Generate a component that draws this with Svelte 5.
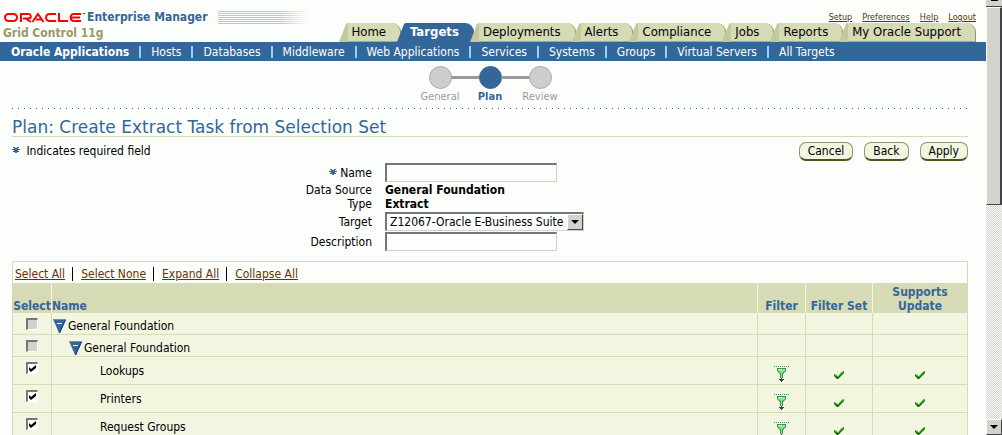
<script>
  const links = ["Setup", "Preferences", "Help", "Logout"];

  const tabs = [
    "Home",
    "Targets",
    "Deployments",
    "Alerts",
    "Compliance",
    "Jobs",
    "Reports",
    "My Oracle Support",
  ];
  const activeTab = "Targets";

  const subTabs = [
    "Oracle Applications",
    "Hosts",
    "Databases",
    "Middleware",
    "Web Applications",
    "Services",
    "Systems",
    "Groups",
    "Virtual Servers",
    "All Targets",
  ];
  const activeSubTab = "Oracle Applications";

  const steps = ["General", "Plan", "Review"];
  const activeStep = "Plan";

  const tableLinks = ["Select All", "Select None", "Expand All", "Collapse All"];

  let taskName = $state("");
  let description = $state("");
  let target = $state("Z12067-Oracle E-Business Suite");

  let rows = $state([
    { name: "General Foundation", level: 0, group: true, checked: false },
    { name: "General Foundation", level: 1, group: true, checked: false },
    { name: "Lookups", level: 2, group: false, checked: true },
    { name: "Printers", level: 2, group: false, checked: true },
    { name: "Request Groups", level: 2, group: false, checked: true },
  ]);
</script>

{#snippet required()}
  <svg class="required" width="8" height="6" viewBox="0 0 8 6" aria-label="Required">
    <path d="M1 0h2v1h2V0h2v1H6v1h2v1H6v1h1v1H5v1H3V5H1V4h1V3H0V2h2V1H1z" fill="#336699" />
  </svg>
{/snippet}

{#snippet tick()}
  <svg class="tick" width="12" height="10" viewBox="0 0 12 10" aria-label="Yes">
    <path d="M1 5h2l2 2 4-5h2v1L5 9H4L1 6z" fill="#006600" />
    <path d="M1 4h1l2 2h1l4-4 1-1h1v1L5 7H4L1 5z" fill="#33bb00" />
  </svg>
{/snippet}

<div class="window">
  <div class="page">
    <header>
      <div class="brand">
        <div class="brand-row">
          <svg class="logo" width="82" height="11" viewBox="0 0 82 11" aria-label="Oracle">
            <g fill="none" stroke="#ff0000" stroke-width="2">
              <path d="M5.5 2h5a3.5 3.5 0 0 1 0 7h-5a3.5 3.5 0 0 1 0-7z" />
              <path d="M18 10V2h7.500a2 2 0 0 1 0 4.500H20M22.500 6.500L28 10" />
              <path d="M29.500 10L35 2l5.500 8M33 7.500h5" />
              <path d="M53 2h-6.500a3.500 3.500 0 0 0 0 7H53" />
              <path d="M56 1v8h9" />
              <path d="M78 2h-7a3.500 3.500 0 0 0 0 7h7M68 5.500h9" />
            </g>
            <path d="M80 1h2v1h-2z" fill="#ff0000" />
          </svg>
          <span class="product">Enterprise Manager</span>
          <span class="stripes"></span>
        </div>
        <div class="edition">Grid Control 11g</div>
      </div>
      <div class="header-right">
        <nav class="global-links">
          {#each links as link}
            <a href="#top">{link}</a>
          {/each}
        </nav>
        <nav class="tabs">
          {#each tabs as tab}
            <a class="tab" class:active={tab === activeTab} href="#top">
              <svg class="slope" width="9" height="19" viewBox="0 0 9 19">
                <path d="M0 19L7 1Q8 0 9 0V19z" />
              </svg>
              <span>{tab}</span>
            </a>
          {/each}
        </nav>
      </div>
    </header>

    <nav class="sub-tabs">
      {#each subTabs as tab}
        <a class:active={tab === activeSubTab} href="#top">{tab}</a>
      {/each}
    </nav>

    <main>
      <ol class="train">
        {#each steps as step}
          <li class:active={step === activeStep}>
            <span class="dot"></span>
            {step}
          </li>
        {/each}
      </ol>
      <svg class="dots" height="1">
        <line x1="0" x2="100%" y1="0.5" y2="0.5" stroke="#336699" stroke-dasharray="1 5" />
      </svg>

      <h1>Plan: Create Extract Task from Selection Set</h1>

      <div class="toolbar">
        <div class="hint">{@render required()} Indicates required field</div>
        <div class="buttons">
          <button type="button">Cancel</button>
          <button type="button">Back</button>
          <button type="button">Apply</button>
        </div>
      </div>

      <form class="fields">
        <label for="name">{@render required()} Name</label>
        <input id="name" type="text" bind:value={taskName} />
        <span>Data Source</span>
        <b>General Foundation</b>
        <span>Type</span>
        <b>Extract</b>
        <label for="target">Target</label>
        <div class="select">
          <select id="target" bind:value={target}>
            <option>Z12067-Oracle E-Business Suite</option>
          </select>
          <span class="arrow"></span>
        </div>
        <label for="description">Description</label>
        <input id="description" type="text" bind:value={description} />
      </form>

      <div class="table-box">
        <div class="table-links">
          {#each tableLinks as link}
            <span><a href="#top">{link}</a></span>
          {/each}
        </div>
        <table>
          <thead>
            <tr>
              <th class="col-select">Select</th>
              <th class="col-name">Name</th>
              <th class="col-filter">Filter</th>
              <th class="col-set">Filter Set</th>
              <th class="col-update">Supports Update</th>
            </tr>
          </thead>
          <tbody>
            {#each rows as row}
              <tr class:leaf={!row.group}>
                <td class="check">
                  <input
                    type="checkbox"
                    aria-label={row.name}
                    disabled={row.group}
                    bind:checked={row.checked}
                  />
                </td>
                <td>
                  <div class="node level-{row.level}">
                    {#if row.group}
                      <svg width="13" height="14" viewBox="0 0 13 14">
                        <path d="M0 0h13L7 14H6z" fill="#336699" />
                        <path d="M0 0h13v1H1z" fill="#5599cc" />
                        <path d="M12 1h1L7 14H6z" fill="#003399" />
                        <path d="M4 4h5v1H4z" fill="#ffffff" />
                      </svg>
                    {/if}
                    {row.name}
                  </div>
                </td>
                <td class="icon">
                  {#if !row.group}
                    <svg width="15" height="16" viewBox="0 0 15 16" aria-label="Filter">
                      <path d="M0 .5h15" stroke="#339966" stroke-dasharray="1 1" />
                      <path d="M3 2h9v3L9 8v4H6V8L3 5z" fill="#339944" />
                      <path d="M4 3h7v2L8 7v5H7V7L4 5z" fill="#99dd99" />
                      <path d="M5 3h3v1H5z" fill="#e0f8e0" />
                      <path d="M7 12h1v1h2v1H9v1H8v1H7v-1H6v-1H5v-1h2z" fill="#444444" />
                    </svg>
                  {/if}
                </td>
                <td class="icon">
                  {#if !row.group}{@render tick()}{/if}
                </td>
                <td class="icon">
                  {#if !row.group}{@render tick()}{/if}
                </td>
              </tr>
            {/each}
          </tbody>
        </table>
      </div>
    </main>
  </div>

  <div class="scrollbar">
    <div class="scroll-up"></div>
    <div class="thumb"></div>
    <div class="track"></div>
    <div class="scroll-down"><span class="arrow-down"></span></div>
  </div>
</div>

<style>
  :global(body) {
    margin: 0;
    overflow: hidden;
  }

  .window {
    display: flex;
    height: 100vh;
    overflow: hidden;
    background: #fcfefc;
    color: #000000;
    font-family: "DejaVu Sans Condensed", "DejaVu Sans", sans-serif;
    font-stretch: condensed;
    font-size: 12px;
    line-height: 14px;
  }

  .page {
    flex: 1;
    min-width: 0;
  }

  a {
    color: #663300;
  }

  /* ----- Header ----- */

  header {
    display: flex;
    justify-content: space-between;
    align-items: flex-end;
    height: 42px;
    padding-right: 10px;
    white-space: nowrap;
  }

  .brand {
    padding: 0 0 1px 3px;
    font-weight: bold;
    line-height: 16px;
  }

  .brand-row {
    display: flex;
    align-items: center;
    gap: 2px;
  }

  .product {
    color: #336699;
  }

  .stripes {
    width: 90px;
    height: 13px;
    margin-left: 8px;
    background: repeating-linear-gradient(#cccc88 0 1px, #fcfefc 1px 2px);
    mask-image: linear-gradient(90deg, #000000 70%, transparent);
  }

  .edition {
    color: #999966;
  }

  .global-links {
    display: flex;
    justify-content: flex-end;
    gap: 10px;
    font-size: 9px;
    line-height: 12px;
  }

  .tabs {
    display: flex;
    justify-content: flex-end;
  }

  .tab {
    display: flex;
    color: #000000;
    font-size: 13px;
    line-height: 18px;
    text-decoration: none;
  }

  .tab + .tab {
    margin-left: -4px;
  }

  .tab span {
    box-sizing: border-box;
    height: 19px;
    padding: 0 14px 0 4px;
    border-right: 1px solid #999966;
    border-bottom: 1px solid #aaaa77;
    border-radius: 0 9px 0 0;
    background: #d6dab5;
  }

  .slope {
    fill: #c4c89c;
  }

  .tab.active {
    color: #ffffff;
    font-weight: bold;
  }

  .tab.active span {
    border-color: #336699;
    background: #336699;
  }

  .tab.active .slope {
    fill: #336699;
  }

  .sub-tabs {
    display: flex;
    align-items: center;
    height: 19px;
    padding-left: 11px;
    background: #336699;
    white-space: nowrap;
  }

  .sub-tabs a {
    color: #ffffff;
    text-decoration: none;
  }

  .sub-tabs a + a {
    margin-left: 10px;
    padding-left: 10px;
    border-left: 2px solid #99ccff;
    line-height: 12px;
  }

  .sub-tabs .active {
    font-weight: bold;
  }

  /* ----- Page content ----- */

  main {
    padding: 5px 18px 0 12px;
  }

  .train {
    display: flex;
    justify-content: center;
    margin: 0;
    padding: 0 0 4px;
    list-style: none;
    color: #999999;
    font-size: 11px;
  }

  .train li {
    display: flex;
    position: relative;
    flex-direction: column;
    align-items: center;
    width: 50px;
  }

  /* connector between two stops */
  .train li + li::before {
    position: absolute;
    top: 10px;
    right: 36px;
    width: 28px;
    height: 3px;
    background: #999999;
    content: "";
  }

  .train .active {
    color: #336699;
    font-weight: bold;
  }

  .dot {
    box-sizing: border-box;
    width: 23px;
    height: 23px;
    margin-bottom: 1px;
    border: 1px solid #a9aba9;
    border-radius: 50%;
    background: #cccecc;
  }

  .active .dot {
    border-color: #336699;
    background: #336699;
  }

  .dots {
    display: block;
    width: 100%;
  }

  h1 {
    margin: 10px 0 0;
    border-bottom: 1px solid #d6dab5;
    color: #336699;
    font-family: "DejaVu Sans", sans-serif;
    font-size: 17px;
    font-stretch: normal;
    font-weight: normal;
    line-height: 17px;
  }

  .toolbar {
    display: flex;
    justify-content: space-between;
    align-items: flex-start;
    padding-top: 5px;
    line-height: 18px;
  }

  .required {
    margin-bottom: 2px;
  }

  .hint .required {
    margin-right: 3px;
  }

  .buttons {
    display: flex;
    gap: 11px;
  }

  button {
    height: 19px;
    padding: 0 8px;
    border: 1px solid #8c9470;
    border-bottom: 2px solid #4a5520;
    border-radius: 7px;
    background: #f2f5e0;
    color: #000000;
    font: inherit;
    line-height: 16px;
  }

  .fields {
    display: grid;
    grid-template-columns: 360px auto;
    justify-content: start;
    justify-items: start;
    column-gap: 13px;
    align-items: center;
    padding-top: 2px;
  }

  .fields > :nth-child(odd) {
    justify-self: end;
  }

  .fields input {
    box-sizing: border-box;
    width: 172px;
    height: 19px;
    margin-bottom: 1px;
    border: 1px solid #d4d0c8;
    border-top: 2px solid #77747a;
    border-left: 2px solid #77747a;
    background: #fcfefc;
    font: inherit;
  }

  .select {
    display: flex;
    position: relative;
    margin: 1px 0;
  }

  select {
    appearance: none;
    box-sizing: border-box;
    width: 199px;
    height: 19px;
    padding: 0 17px 0 3px;
    border: 1px solid #d4d0c8;
    border-top: 2px solid #77747a;
    border-left: 2px solid #77747a;
    border-radius: 0;
    background: #fcfefc;
    color: #000000;
    font: inherit;
  }

  .arrow {
    position: absolute;
    top: 2px;
    right: 1px;
  }

  .arrow,
  .scroll-down {
    display: flex;
    align-items: center;
    justify-content: center;
    box-sizing: border-box;
    width: 16px;
    height: 16px;
    border: 1px solid #fcfefc;
    border-right-color: #45424a;
    border-bottom-color: #45424a;
    background: #d4d2cc;
    pointer-events: none;
  }

  .arrow::before,
  .arrow-down {
    width: 0;
    border: 4px solid transparent;
    border-top-color: #000000;
    border-bottom: 0;
    content: "";
  }

  /* ----- Table ----- */

  .table-box {
    margin-top: 9px;
    border: 1px solid #d6dab5;
    border-bottom: 0;
  }

  .table-links {
    display: flex;
    align-items: center;
    box-sizing: border-box;
    height: 21px;
    padding: 3px 0 0 2px;
  }

  .table-links span + span {
    margin-left: 7px;
    padding-left: 8px;
    border-left: 1px solid #000000;
  }

  table {
    width: 100%;
    border-collapse: collapse;
    table-layout: fixed;
    background: #f2f5e0;
  }

  th {
    height: 30px;
    padding: 0;
    border-left: 1px solid #f2f5e0;
    background: #d6dab5;
    color: #336699;
    line-height: 14px;
    vertical-align: bottom;
  }

  th:first-child,
  td:first-child {
    border-left: 0;
  }

  .col-select {
    width: 38px;
  }

  .col-name {
    text-align: left;
  }

  .col-filter {
    width: 47px;
  }

  .col-set {
    width: 66px;
  }

  .col-update {
    width: 94px;
  }

  td {
    height: 21px;
    padding: 0;
    border-left: 1px solid #d6dab5;
    border-bottom: 1px solid #d6dab5;
  }

  .leaf td {
    height: 27px;
  }

  .check {
    text-align: center;
    vertical-align: top;
  }

  .check input {
    appearance: none;
    display: block;
    box-sizing: border-box;
    width: 12px;
    height: 12px;
    margin: 5px auto 0;
    border: 1px solid #fcfefc;
    border-top: 2px solid #77747a;
    border-left: 2px solid #77747a;
    background: #fcfefc;
  }

  .check input:disabled {
    background: #d4d2cc;
  }

  .check input:checked {
    background: #fcfefc
      url("data:image/svg+xml,%3Csvg xmlns='http://www.w3.org/2000/svg' viewBox='0 0 9 9'%3E%3Cpath d='M1 3l2 2 5-4v3L3 8 1 6z'/%3E%3C/svg%3E");
  }

  .node {
    display: flex;
    align-items: center;
    gap: 2px;
    padding-left: 1px;
  }

  .level-0,
  .level-1 {
    padding-top: 4px;
  }

  .level-1 {
    padding-left: 17px;
  }

  .level-2 {
    padding-left: 48px;
  }

  .icon {
    text-align: center;
    vertical-align: bottom;
  }

  .icon svg {
    display: block;
    margin: 0 auto 2px;
  }

  .icon .tick {
    margin-bottom: 4px;
  }

  /* ----- Scrollbar ----- */

  .scrollbar {
    display: flex;
    flex-direction: column;
    box-sizing: border-box;
    width: 16px;
    background: repeating-conic-gradient(#d4d2cc 0 25%, #fcfefc 0 50%) 0 0 / 2px 2px;
  }

  .scroll-up {
    box-sizing: border-box;
    height: 7px;
    border-bottom: 1px solid #45424a;
    background: linear-gradient(#000000, #000000) center top / 7px 1px no-repeat #d4d2cc;
  }

  .thumb {
    box-sizing: border-box;
    height: 198px;
    border: 1px solid #fcfefc;
    border-right: 2px solid #45424a;
    border-bottom-color: #45424a;
    background: #d4d2cc;
  }

  .track {
    flex: 1;
  }
</style>
